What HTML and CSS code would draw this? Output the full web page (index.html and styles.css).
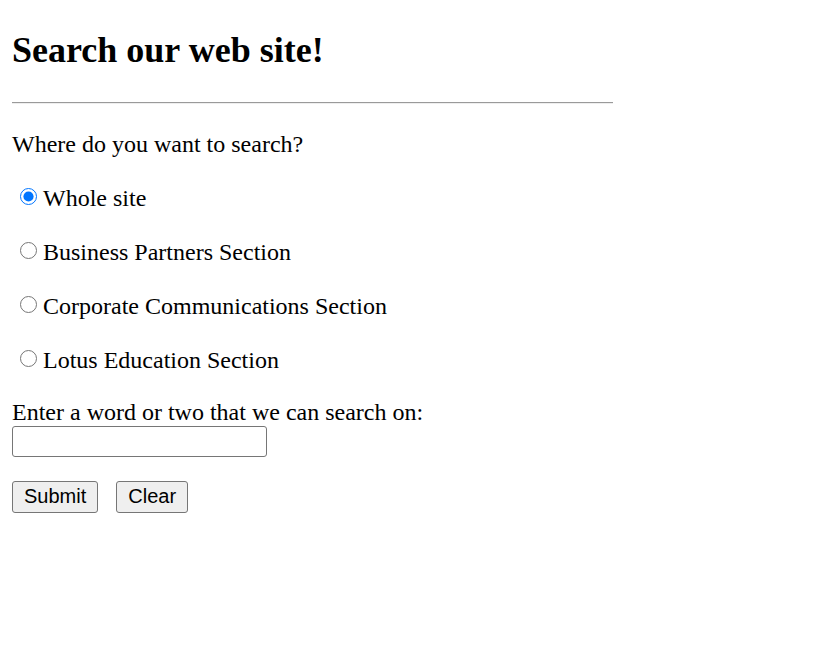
FILE: index.html
```html
<!DOCTYPE html>
<html lang="en">
<head>
<meta charset="utf-8">
<title>Search our web site!</title>
<link rel="stylesheet" href="styles.css">
</head>
<body>
<form class="page">
  <h1 class="title">Search our web site!</h1>
  <hr class="rule">
  <p class="question">Where do you want to search?</p>
  <div class="options">
    <label class="option"><input class="radio" type="radio" name="scope" checked><span>Whole site</span></label>
    <label class="option"><input class="radio" type="radio" name="scope"><span>Business Partners Section</span></label>
    <label class="option"><input class="radio" type="radio" name="scope"><span>Corporate Communications Section</span></label>
    <label class="option"><input class="radio" type="radio" name="scope"><span>Lotus Education Section</span></label>
  </div>
  <label class="prompt" for="q">Enter a word or two that we can search on:</label>
  <input class="query" id="q" type="text">
  <div class="actions">
    <button class="btn" type="submit">Submit</button>
    <button class="btn" type="reset">Clear</button>
  </div>
</form>
</body>
</html>
```
FILE: styles.css
```css
html, body {
  margin: 0;
  padding: 0;
  background: #ffffff;
}

.page {
  display: flex;
  flex-direction: column;
  align-items: flex-start;
  padding: 30px 12px 0 12px;
  font-family: "Liberation Serif", "Times New Roman", serif;
  font-size: 24px;
  color: #000000;
}

.title {
  margin: 0;
  font-size: 36px;
  font-weight: bold;
  line-height: 41px;
}

.rule {
  box-sizing: border-box;
  width: 601px;
  height: 2px;
  margin: 31px 0 0 0;
  border: 0;
  border-top: 1px solid #9a9a9a;
  border-bottom: 1px solid #eeeeee;
}

.question {
  margin: 26px 0 0 0;
  line-height: 28px;
}

.options {
  display: flex;
  flex-direction: column;
  gap: 26px;
  margin-top: 26px;
}

.option {
  display: flex;
  align-items: flex-start;
  line-height: 28px;
}

.radio {
  width: 17px;
  height: 17px;
  margin: 4px 6px 0 8px;
  accent-color: #0075ff;
}

.prompt {
  margin-top: 24px;
  line-height: 28px;
}

.query {
  box-sizing: border-box;
  width: 255px;
  height: 31px;
  margin: 0;
  border: 1px solid #767676;
  border-radius: 3px;
  padding: 0 4px;
  font-size: 20px;
  background: #ffffff;
}

.actions {
  display: flex;
  gap: 18px;
  margin-top: 24px;
}

.btn {
  box-sizing: border-box;
  height: 32px;
  padding: 0 11px 1px 11px;
  font-family: "Liberation Sans", Arial, sans-serif;
  font-size: 20px;
  line-height: 23px;
  color: #000000;
  background: #efefef;
  border: 1px solid #767676;
  border-radius: 3px;
}
```
